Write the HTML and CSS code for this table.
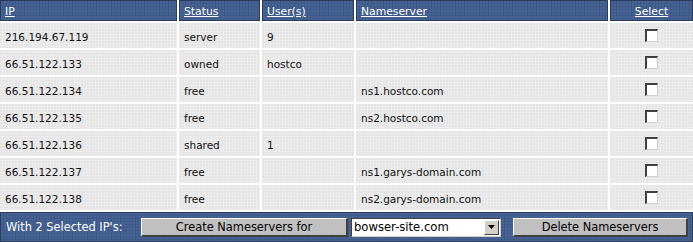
FILE: index.html
```html
<!DOCTYPE html>
<html>
<head>
<meta charset="utf-8">
<link rel="stylesheet" href="styles.css">
</head>
<body>
<div class="ipgrid">
  <div class="hd"><a href="#">IP</a></div>
  <div class="hd"><a href="#">Status</a></div>
  <div class="hd"><a href="#">User(s)</a></div>
  <div class="hd"><a href="#">Nameserver</a></div>
  <div class="hd center"><a href="#">Select</a></div>

  <div class="cell">216.194.67.119</div><div class="cell">server</div><div class="cell">9</div><div class="cell"></div><div class="cell center"><span class="cb"></span></div>
  <div class="cell">66.51.122.133</div><div class="cell">owned</div><div class="cell">hostco</div><div class="cell"></div><div class="cell center"><span class="cb"></span></div>
  <div class="cell">66.51.122.134</div><div class="cell">free</div><div class="cell"></div><div class="cell">ns1.hostco.com</div><div class="cell center"><span class="cb"></span></div>
  <div class="cell">66.51.122.135</div><div class="cell">free</div><div class="cell"></div><div class="cell">ns2.hostco.com</div><div class="cell center"><span class="cb"></span></div>
  <div class="cell">66.51.122.136</div><div class="cell">shared</div><div class="cell">1</div><div class="cell"></div><div class="cell center"><span class="cb"></span></div>
  <div class="cell">66.51.122.137</div><div class="cell">free</div><div class="cell"></div><div class="cell">ns1.garys-domain.com</div><div class="cell center"><span class="cb"></span></div>
  <div class="cell">66.51.122.138</div><div class="cell">free</div><div class="cell"></div><div class="cell">ns2.garys-domain.com</div><div class="cell center"><span class="cb"></span></div>

  <div class="foot">
    <span class="label">With 2 Selected IP's:</span>
    <span class="btn create">Create Nameservers for</span>
    <span class="sel"><span class="selval">bowser-site.com</span><span class="arrow"><svg width="7" height="4" viewBox="0 0 7 4"><path d="M0 0h7L3.5 4z" fill="#000"/></svg></span></span>
    <span class="btn del">Delete Nameservers</span>
  </div>
</div>
</body>
</html>
```
FILE: styles.css
```css
html, body {
  margin: 0;
  padding: 0;
  background: #ffffff;
}
body {
  font-family: "DejaVu Sans", Verdana, sans-serif;
  font-size: 10.5px;
  color: #000;
}
.ipgrid {
  display: grid;
  grid-template-columns: 177px 81px 92px 252px 83px;
  grid-template-rows: 21px repeat(7, 25px) 30px;
  gap: 2px;
  width: 693px;
}
.hd {
  background-color: #3d5a8b;
  background-image: radial-gradient(circle at 1px 1px, #4d6897 0.6px, transparent 1px);
  background-size: 3px 3px;
  border: 1px solid #2a3b5c;
  display: flex;
  align-items: center;
  padding-left: 4px;
  padding-top: 1px;
  box-sizing: border-box;
  font-size: 10.8px;
}
.hd a {
  color: #ffffff;
  text-decoration: underline;
}
.hd.center {
  justify-content: center;
  padding-left: 0;
}
.cell {
  background-color: #ececec;
  background-image: radial-gradient(circle at 1px 1px, #e2e2e2 0.6px, transparent 1px);
  background-size: 3px 3px;
  display: flex;
  align-items: center;
  padding-left: 5px;
  padding-top: 2px;
  box-sizing: border-box;
  color: #111;
}
.cell.center {
  justify-content: center;
  padding-left: 0;
  padding-top: 0;
}
.cb {
  display: block;
  width: 13px;
  height: 13px;
  box-sizing: border-box;
  background: #fff;
  border-top: 2px solid #404040;
  border-left: 2px solid #404040;
  border-right: 1px solid #d4d0c8;
  border-bottom: 1px solid #d4d0c8;
}
.foot {
  grid-column: 1 / -1;
  background-color: #3d5a8b;
  background-image: radial-gradient(circle at 1px 1px, #4d6897 0.6px, transparent 1px);
  background-size: 3px 3px;
  border: 1px solid #2a3b5c;
  box-sizing: border-box;
  display: flex;
  align-items: center;
  padding-left: 5px;
  font-size: 11.4px;
}
.label {
  color: #ffffff;
  width: 135px;
}
.btn {
  display: flex;
  align-items: center;
  justify-content: center;
  height: 19px;
  box-sizing: border-box;
  background: #c0c0c0;
  border-top: 1px solid #ffffff;
  border-left: 1px solid #ffffff;
  border-right: 2px solid #404040;
  border-bottom: 2px solid #404040;
  color: #000;
}
.create {
  width: 207px;
}
.sel {
  margin-left: 3px;
  width: 150px;
  height: 19px;
  box-sizing: border-box;
  background: #fff;
  border-top: 1px solid #404040;
  border-left: 1px solid #404040;
  border-right: 1px solid #d4d0c8;
  border-bottom: 1px solid #d4d0c8;
  display: flex;
  align-items: center;
  font-size: 11.6px;
}
.selval {
  flex: 1;
  padding-left: 2px;
}
.arrow {
  width: 15px;
  height: 15px;
  box-sizing: border-box;
  margin-right: 1px;
  background: #d4d0c8;
  border-top: 1px solid #ffffff;
  border-left: 1px solid #ffffff;
  border-right: 1px solid #404040;
  border-bottom: 1px solid #404040;
  display: flex;
  align-items: center;
  justify-content: center;
}
.del {
  margin-left: 12px;
  width: 175px;
}
```
